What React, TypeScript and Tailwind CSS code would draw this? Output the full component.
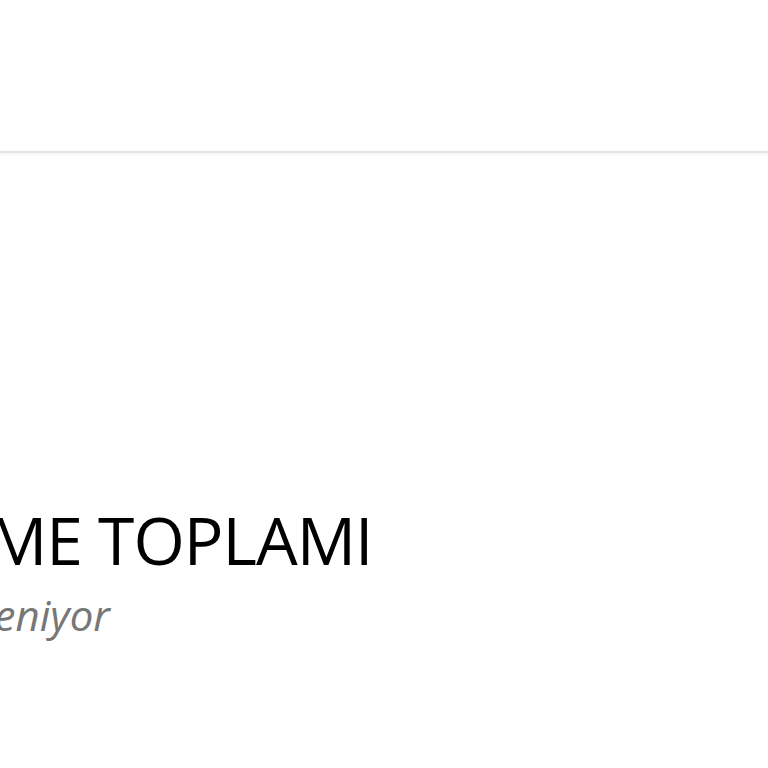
export default function App() {
  return (
    <div className="h-[768px] w-[768px] overflow-hidden bg-white font-['Open_Sans',sans-serif]">
      <header className="h-[153px] border-b-2 border-[#e4e4e4] shadow-[0_1px_3px_rgba(0,0,0,0.06)]" />
      <main className="pt-[353px]">
        <h1 className="ml-[-145px] whitespace-nowrap text-[66px] leading-none tracking-[-1px] text-black">
          ÖDEME TOPLAMI
        </h1>
        <p className="ml-[-82px] mt-[22px] whitespace-nowrap text-[42px] italic leading-none text-[#777]">
          Yükleniyor
        </p>
      </main>
    </div>
  );
}
